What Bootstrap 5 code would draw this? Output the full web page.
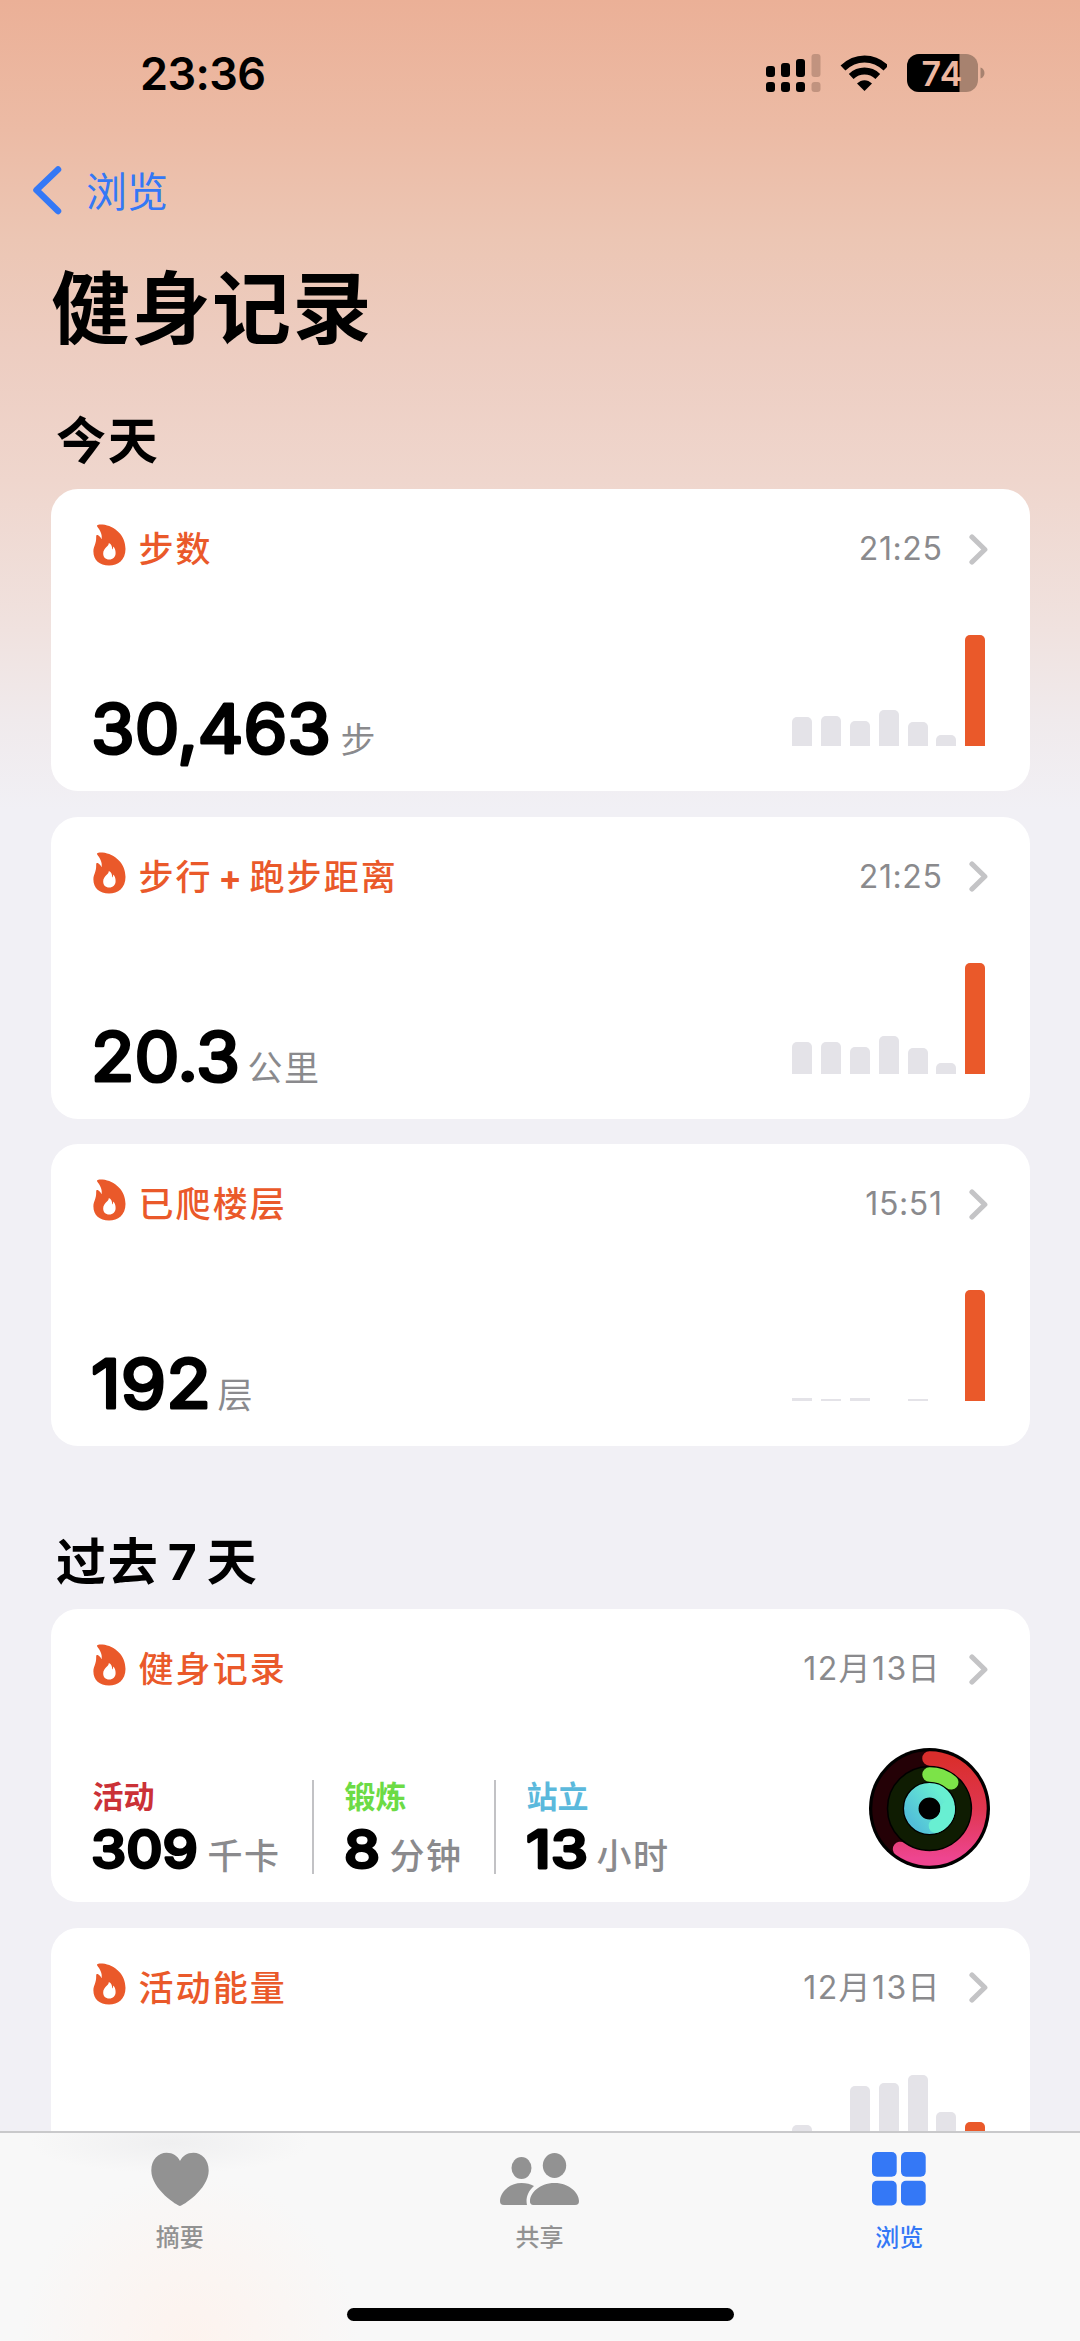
<!DOCTYPE html>
<html lang="zh-CN">
<head>
<meta charset="utf-8">
<meta name="viewport" content="width=device-width, initial-scale=1">
<title>健身记录</title>
<link href="https://cdn.jsdelivr.net/npm/bootstrap@5.3.0/dist/css/bootstrap.min.css" rel="stylesheet">
<style>
  body { font-family: Inter, "Noto Sans CJK SC", sans-serif; color: #000; background: #f1f0f5; }
  svg { display: block; flex: none; }
  .screen { width: 1080px; height: 2341px; background: linear-gradient(180deg, #ebb097 0, #ecbba5 130px, #ecc6b4 240px, #edcdc1 350px, #efd6cd 480px, #f0e2df 630px, #f0eaec 720px, #f1f0f5 810px); }
  .status { height: 145px; padding: 0 94px 0 140px; }
  .clock { font-size: 45px; font-weight: 600; line-height: 60px; letter-spacing: -.6px; margin-top: 3px; }
  .nav-back { height: 90px; padding-left: 30px; color: #3478f6; font-size: 41px; line-height: 60px; gap: 22px; }
  .nav-back span { padding-top: 3px; }
  .page-title { font-size: 79px; font-weight: 700; line-height: 100px; letter-spacing: 1.5px; margin: 24px 0 -3px 51px; }
  .section-title { font-size: 50px; font-weight: 700; line-height: 60px; letter-spacing: 1.8px; word-spacing: -5.5px; margin: 0 0 0 56px; }
  .tiles { gap: 25.5px; padding: 0 50.5px; }
  .tile { border: 0; border-radius: 27px; height: 302px; padding: 30px 40px 45px 42px; background: #fff; }
  .tile-rings { height: 293px; padding-bottom: 28px; }
  .tile-head { height: 60px; padding-right: 1.5px; }
  .tile-name { color: #ea592a; font-size: 35px; font-weight: 500; line-height: 60px; letter-spacing: 2.1px; word-spacing: -6px; margin-left: 13px; }
  .stamp { color: #8a8a8d; font-size: 32px; line-height: 62px; letter-spacing: .6px; margin-right: 26.5px; }
  .stamp.date { letter-spacing: 1.4px; margin-right: 28px; }
  .unit { color: #8a8a8d; font-size: 35px; line-height: 12px; letter-spacing: 1.5px; }
  .figure-text { font-family: Inter, sans-serif; font-size: 68px; font-weight: 400; stroke: #000; stroke-width: 3.2; stroke-linejoin: round; }
  .figure-text.bold { font-size: 52px; font-weight: 500; stroke-width: 2.8; }
  .bars { height: 111px; gap: 8.8px; margin-right: 4.3px; }
  .bars div { width: 20px; border-radius: 5px 5px 0 0; background: #e4e3e8; }
  .bars .today { background: #ea592a; }
  .metric-label { font-size: 31px; font-weight: 700; line-height: 34px; }
  .metric .unit { font-weight: 500; line-height: 36px; }
  .metric + .metric { border-left: 2px solid #c2c2c5; }
  .rings { margin-bottom: 5px; }
  .viewport-area { height: 2131px; }
  .tabs { height: 210px; border-top: 2px solid #c9c9cb; background: radial-gradient(circle at 190px 210px, #fdf3ee 0, transparent 170px), radial-gradient(ellipse at 170px 10px, #efeff0 0, transparent 140px), #f8f8f8; }
  .tab-row { padding-right: 1px; }
  .tab { color: #929292; font-size: 24px; font-weight: 500; line-height: 36px; gap: 12px; padding-top: 18px; }
  .tab.active { color: #3478f6; }
  .home-bar { width: 387px; height: 13px; border-radius: 7px; background: #000; margin-bottom: 20px; }
</style>
</head>
<body>
<svg width="0" height="0" class="position-absolute" aria-hidden="true">
  <symbol id="flame" viewBox="0 0 33 42">
    <path fill="#ea592a" fill-rule="evenodd" d="M4.2 1.2C5 .4 7.500 .3 9.500 .6C22 2 32.500 11.500 32.500 25C32.500 36 25 41.500 16 41.500C6.500 41.500 .4 36 .4 27.500C.4 22 3.400 20.500 3.200 12.500C3.200 11 4.200 10.700 5.500 11.500C6.700 12.300 7.800 13.500 8.500 15.200C9.300 12.500 8.500 8 4.700 3.200C4.200 2.500 3.800 1.700 4.200 1.200ZM15.800 19C16.300 22 10.200 24 10.200 29.500C10.200 33.200 12.500 35.500 16.200 35.500C20 35.500 22.600 33 22.600 29C22.600 26 21.800 24 20.300 22.500C20 24 19.800 25 19 25.600C19.500 23 18.500 20 15.800 19Z"/>
  </symbol>
  <symbol id="chev" viewBox="0 0 19 31">
    <path d="M3 3L15.800 15.500L3 28" fill="none" stroke="#c4c4c6" stroke-width="5.200" stroke-linecap="round" stroke-linejoin="round"/>
  </symbol>
</svg>

<div class="screen overflow-hidden d-flex flex-column">
  <div class="viewport-area overflow-hidden flex-shrink-0">
    <header class="status d-flex justify-content-between align-items-center">
      <span class="clock">23:36</span>
      <div class="d-flex align-items-center">
        <svg width="55" height="38" viewBox="0 0 55 38">
          <rect x="0" y="12" width="9" height="11" rx="3"/><rect x="15" y="9" width="9" height="14" rx="3"/><rect x="30" y="5" width="9" height="18" rx="3"/>
          <rect x="0" y="28" width="9" height="10" rx="3"/><rect x="15" y="28" width="9" height="10" rx="3"/><rect x="30" y="28" width="9" height="10" rx="3"/>
          <g fill="#c1937f"><rect x="45.500" y="0" width="9" height="23" rx="3"/><rect x="45.500" y="28" width="9" height="10" rx="3"/></g>
        </svg>
        <svg width="50" height="38" viewBox="-2 0 50 38" class="ms-3 me-3">
          <g transform="translate(1.500 0)" fill="none" stroke="#000" stroke-width="7"><path d="M2.500 14C15 1.900 33 1.900 45.500 14"/><path d="M10.700 22.500C18.500 15.300 29.500 15.300 37.300 22.500"/></g>
          <path d="M18 29.500C22.500 25 28.500 25 33 29.500L25.500 37Z"/>
        </svg>
        <svg width="79" height="38" viewBox="0 0 79 38" class="ms-1">
          <clipPath id="cell"><rect width="71" height="38" rx="12"/></clipPath>
          <g clip-path="url(#cell)"><rect width="71" height="38" fill="#a7826f"/><rect width="52.500" height="38"/></g>
          <path d="M73.500 13.500C78.800 15 78.800 23 73.500 24.500Z" fill="#a7826f"/>
          <text x="14.500" y="31.500" font-family="Inter, sans-serif" font-size="34" font-weight="600" fill="#edb7a0" textLength="41">74</text>
        </svg>
      </div>
    </header>

    <nav class="nav-back d-flex align-items-center">
      <svg width="34" height="50" viewBox="0 0 34 50"><path d="M28 4.500L6.500 25L28 46" fill="none" stroke="#3478f6" stroke-width="6.500" stroke-linecap="round" stroke-linejoin="round"/></svg>
      <span>浏览</span>
    </nav>

    <h1 class="page-title">健身记录</h1>

    <h2 class="section-title" style="padding-top:55px;height:133px">今天</h2>
    <section class="tiles d-flex flex-column">
      <article class="tile card justify-content-between">
        <div class="tile-head d-flex align-items-center">
          <svg width="33" height="42" class="mb-2"><use href="#flame"/></svg><span class="tile-name">步数</span>
          <span class="stamp ms-auto">21:25</span><svg width="19" height="31"><use href="#chev"/></svg>
        </div>
        <div class="d-flex justify-content-between align-items-end">
          <div class="d-flex align-items-end">
            <svg width="248" height="66" viewBox="0 0 248 66" overflow="visible"><text class="figure-text" x="-2" y="73" textLength="240" lengthAdjust="spacingAndGlyphs">30,463</text></svg>
            <span class="unit">步</span>
          </div>
          <div class="bars d-flex align-items-end">
            <div style="height:29px"></div><div style="height:30px"></div><div style="height:25px"></div><div style="height:36px"></div><div style="height:24px"></div><div style="height:11px"></div><div class="today" style="height:111px"></div>
          </div>
        </div>
      </article>

      <article class="tile card justify-content-between">
        <div class="tile-head d-flex align-items-center">
          <svg width="33" height="42" class="mb-2"><use href="#flame"/></svg><span class="tile-name">步行 <b>+</b> 跑步距离</span>
          <span class="stamp ms-auto">21:25</span><svg width="19" height="31"><use href="#chev"/></svg>
        </div>
        <div class="d-flex justify-content-between align-items-end">
          <div class="d-flex align-items-end">
            <svg width="155" height="66" viewBox="0 0 155 66" overflow="visible"><text class="figure-text" x="-2" y="73" textLength="149" lengthAdjust="spacingAndGlyphs">20.3</text></svg>
            <span class="unit">公里</span>
          </div>
          <div class="bars d-flex align-items-end">
            <div style="height:32px"></div><div style="height:32px"></div><div style="height:27px"></div><div style="height:38px"></div><div style="height:26px"></div><div style="height:11px"></div><div class="today" style="height:111px"></div>
          </div>
        </div>
      </article>

      <article class="tile card justify-content-between">
        <div class="tile-head d-flex align-items-center">
          <svg width="33" height="42" class="mb-2"><use href="#flame"/></svg><span class="tile-name">已爬楼层</span>
          <span class="stamp ms-auto">15:51</span><svg width="19" height="31"><use href="#chev"/></svg>
        </div>
        <div class="d-flex justify-content-between align-items-end">
          <div class="d-flex align-items-end">
            <svg width="125" height="66" viewBox="0 0 125 66" overflow="visible"><text class="figure-text" x="-2" y="73" textLength="120" lengthAdjust="spacingAndGlyphs">192</text></svg>
            <span class="unit">层</span>
          </div>
          <div class="bars d-flex align-items-end">
            <div class="rounded-0" style="height:3px"></div><div class="rounded-0" style="height:2px"></div><div class="rounded-0" style="height:3px"></div><div style="height:0"></div><div class="rounded-0" style="height:2px"></div><div style="height:0"></div><div class="today" style="height:111px"></div>
          </div>
        </div>
      </article>
    </section>

    <h2 class="section-title" style="padding-top:86px;height:163px">过去 7 天</h2>
    <section class="tiles d-flex flex-column">
      <article class="tile tile-rings card justify-content-between">
        <div class="tile-head d-flex align-items-center">
          <svg width="33" height="42" class="mb-2"><use href="#flame"/></svg><span class="tile-name">健身记录</span>
          <span class="stamp date ms-auto">12月13日</span><svg width="19" height="31"><use href="#chev"/></svg>
        </div>
        <div class="d-flex justify-content-between align-items-end">
          <div class="d-flex">
            <div class="metric" style="width:219px">
              <div class="metric-label" style="color:#cb3137">活动</div>
              <div class="d-flex align-items-end"><svg width="115" height="60" viewBox="0 0 115 60" overflow="visible"><text class="figure-text bold" x="-2" y="54" textLength="107" lengthAdjust="spacingAndGlyphs">309</text></svg><span class="unit">千卡</span></div>
            </div>
            <div class="metric" style="width:182px;padding-left:31px">
              <div class="metric-label" style="color:#6cdb45">锻炼</div>
              <div class="d-flex align-items-end"><svg width="45" height="60" viewBox="0 0 45 60" overflow="visible"><text class="figure-text bold" x="-1" y="54" textLength="36" lengthAdjust="spacingAndGlyphs">8</text></svg><span class="unit">分钟</span></div>
            </div>
            <div class="metric" style="padding-left:31px">
              <div class="metric-label" style="color:#5bb9dc">站立</div>
              <div class="d-flex align-items-end"><svg width="70" height="60" viewBox="0 0 70 60" overflow="visible"><text class="figure-text bold" x="-1" y="54" textLength="62" lengthAdjust="spacingAndGlyphs">13</text></svg><span class="unit">小时</span></div>
            </div>
          </div>
          <svg class="rings" width="121" height="121" viewBox="-60.500 -60.500 121 121" fill="none" stroke-width="14.500" stroke-linecap="round">
            <defs>
              <linearGradient id="move" x1="0" y1="-50" x2="0" y2="50" gradientUnits="userSpaceOnUse"><stop stop-color="#da2e2c"/><stop offset=".5" stop-color="#df3650"/><stop offset="1" stop-color="#ee4590"/></linearGradient>
              <linearGradient id="stand" x1="-14" y1="18" x2="18" y2="-6" gradientUnits="userSpaceOnUse"><stop stop-color="#52bfd9"/><stop offset="1" stop-color="#68efd2"/></linearGradient>
            </defs>
            <circle r="60.500" fill="#000"/>
            <circle r="50" stroke="#240106"/><circle r="34" stroke="#0f1c02"/>
            <path d="M0 -50A50 50 0 1 1 -29.400 40.500" stroke="url(#move)"/>
            <path d="M0 -34A34 34 0 0 1 21.700 -26.200" stroke="#7ce348"/>
            <circle r="18.200" stroke="url(#stand)"/>
            <path d="M18.200 0A18.200 18.200 0 0 1 6.300 17.200" stroke="#68efd2"/>
          </svg>
        </div>
      </article>

      <article class="tile card justify-content-between">
        <div class="tile-head d-flex align-items-center">
          <svg width="33" height="42" class="mb-2"><use href="#flame"/></svg><span class="tile-name">活动能量</span>
          <span class="stamp date ms-auto">12月13日</span><svg width="19" height="31"><use href="#chev"/></svg>
        </div>
        <div class="d-flex justify-content-end">
          <div class="bars d-flex align-items-end">
            <div style="height:60px"></div><div style="height:0"></div><div style="height:99px"></div><div style="height:102px"></div><div style="height:110px"></div><div style="height:73px"></div><div class="today" style="height:63px"></div>
          </div>
        </div>
      </article>
    </section>
  </div>

  <footer class="tabs d-flex flex-column align-items-center justify-content-between flex-shrink-0">
    <div class="tab-row row g-0 w-100">
      <div class="col tab d-flex flex-column align-items-center">
        <svg width="58" height="57" viewBox="0 0 58 57"><path fill="#929292" d="M29 55C27 55 .3 38.500 .3 19.500C.3 8.500 7.500 1.800 15.500 1.800C22 1.800 26.500 5 29 10C31.500 5 36 1.800 42.500 1.800C50.500 1.800 57.700 8.500 57.700 19.500C57.700 38.500 31 55 29 55Z"/></svg>
        <span>摘要</span>
      </div>
      <div class="col tab d-flex flex-column align-items-center">
        <svg width="79" height="57" viewBox="0 0 79 57" fill="#929292"><ellipse cx="21.500" cy="17" rx="10" ry="11"/><ellipse cx="54.500" cy="14.500" rx="11.700" ry="12.500"/><path d="M30.500 52.500A3.500 3.500 0 0 0 34 54H75C78 54 79 52.500 79 50C79 42.500 70 32 54.500 32S30 42.500 30 50C30 51 30 52 30.500 52.500Z"/><path d="M4 54H27C25.500 48 27.500 40.500 34 35C30.500 33 26.500 32 21.500 32C8 32 0 42.500 0 50C0 52.500 1 54 4 54Z"/></svg>
        <span>共享</span>
      </div>
      <div class="col tab active d-flex flex-column align-items-center">
        <svg width="54" height="57" viewBox="0 0 54 57" fill="#3478f6"><rect y="1" width="24.700" height="24.700" rx="5"/><rect x="29" y="1" width="24.700" height="24.700" rx="5"/><rect y="29.700" width="24.700" height="24.700" rx="5"/><rect x="29" y="29.700" width="24.700" height="24.700" rx="5"/></svg>
        <span>浏览</span>
      </div>
    </div>
    <div class="home-bar"></div>
  </footer>
</div>
<script src="https://cdn.jsdelivr.net/npm/bootstrap@5.3.0/dist/js/bootstrap.bundle.min.js"></script>
</body>
</html>
